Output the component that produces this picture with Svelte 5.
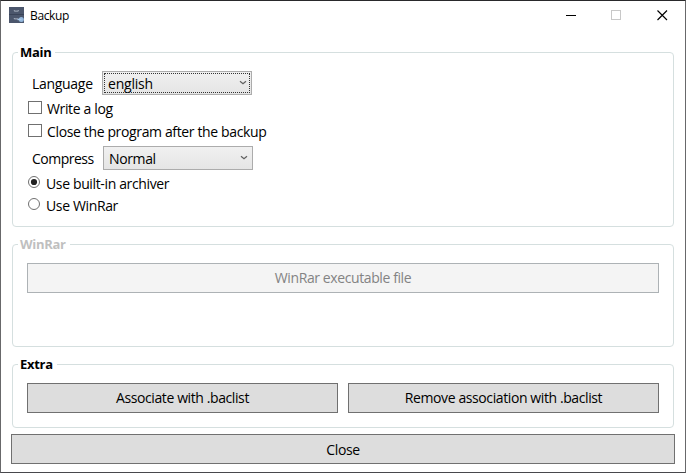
<script>
  let language = 'english';
  let compression = 'Normal';
  const checks = ['Write a log', 'Close the program after the backup'];
  const archivers = ['Use built-in archiver', 'Use WinRar'];
  let archiver = archivers[0];
</script>

<main class="window">
  <header>
    <svg class="logo" width="15" height="16" viewBox="0 0 15 16">
      <rect width="15" height="16" fill="#4b566c" />
      <path d="M0 7.5h15" stroke="#394358" stroke-width="1" />
      <path d="M5.3 3.2v.9h4v-.9M5.3 11v.9h4" fill="none" stroke="#b3bccb" stroke-width=".9" />
      <circle cx="12.3" cy="12.5" r="2.5" fill="#93b7dd" />
      <path d="M8.5 12.5h4" stroke="#a9c8e8" stroke-width="1.4" />
    </svg>
    <h1>Backup</h1>
    <nav>
      <svg width="46" height="30" viewBox="0 0 46 30" shape-rendering="crispEdges"><path d="M18 14.5h10" stroke="#000" /></svg>
      <svg width="46" height="30" viewBox="0 0 46 30"><rect x="17.5" y="9.5" width="9" height="9" fill="none" stroke="#c8c8c8" /></svg>
      <svg width="46" height="30" viewBox="0 0 46 30"><path d="M17.5 9.5l9.5 9.5M27 9.5l-9.5 9.5" stroke="#000" stroke-width="1.15" /></svg>
    </nav>
  </header>

  <section class="group settings">
    <h2>Main</h2>
    <div class="field">
      <span class="label language">Language</span>
      <div class="combo focused">
        <span>{language}</span>
        <svg width="8" height="6" viewBox="0 0 8 6"><path d="M1 1.2l3 2.6 3-2.6" fill="none" stroke="#606060" stroke-width="1.2" /></svg>
      </div>
    </div>
    {#each checks as text}
      <div class="check"><i></i><span>{text}</span></div>
    {/each}
    <div class="field second">
      <span class="label compress">Compress</span>
      <div class="combo">
        <span>{compression}</span>
        <svg width="8" height="6" viewBox="0 0 8 6"><path d="M1 1.2l3 2.6 3-2.6" fill="none" stroke="#606060" stroke-width="1.2" /></svg>
      </div>
    </div>
    {#each archivers as text}
      <div class="radio">
        <svg width="12" height="12" viewBox="0 0 12 12">
          <circle cx="6" cy="6" r="5.5" fill="#fff" stroke="#707070" />
          {#if text === archiver}<circle cx="6" cy="6" r="3.1" fill="#212121" />{/if}
        </svg>
        <span>{text}</span>
      </div>
    {/each}
  </section>

  <section class="group winrar">
    <h2 class="dim">WinRar</h2>
    <div class="buttons"><button disabled>WinRar executable file</button></div>
  </section>

  <section class="group extra">
    <h2>Extra</h2>
    <div class="buttons">
      <button>Associate with .baclist</button>
      <button>Remove association with .baclist</button>
    </div>
  </section>

  <button class="close">Close</button>
</main>

<style>
  .window {
    box-sizing: border-box;
    width: 686px;
    height: 473px;
    display: flex;
    flex-direction: column;
    background: #fff;
    border: 1px solid #68686a;
    border-top-color: #29292b;
    border-bottom-color: #48484c;
    font: 14px/20px "Open Sans", "Noto Sans", sans-serif;
    letter-spacing: -0.36px;
    color: #000;
    overflow: hidden;
  }
  span { white-space: nowrap; }
  header { display: flex; height: 30px; flex: none; padding-left: 8px; }
  .logo { margin-top: 6px; }
  h1 { margin: 5px 0 0 6px; font-size: 12px; line-height: 20px; font-weight: 400; letter-spacing: -0.35px; }
  nav { display: flex; margin: 0 -1px 0 auto; }
  .group {
    box-sizing: border-box;
    flex: none;
    margin: 0 11px;
    border: 1px solid #d5dfdf;
    border-radius: 4px;
    display: flex;
    flex-direction: column;
  }
  .settings { height: 175px; margin-top: 21px; }
  .winrar { height: 103px; margin-top: 17px; }
  .extra { height: 64px; margin-top: 17px; }
  h2 {
    align-self: flex-start;
    flex: none;
    margin: -11px 0 0 5px;
    padding: 0 4px 0 2px;
    background: #fff;
    font-size: 13px;
    line-height: 20px;
    font-weight: 700;
    letter-spacing: -0.3px;
  }
  .dim { color: #bfbfbf; }
  .field { display: flex; height: 24px; margin: 9px 0 0 19px; }
  .label { width: 70px; padding-top: 3px; }
  .language { letter-spacing: -0.3px; }
  .compress { letter-spacing: -0.5px; }
  .second { margin-top: -1px; }
  .second .label { width: 71px; }
  .combo {
    box-sizing: border-box;
    width: 150px;
    height: 24px;
    border: 1px solid #acacac;
    background: linear-gradient(#f0f0f0, #e5e5e5);
    display: flex;
    justify-content: space-between;
    padding: 2px 4px 0 5px;
  }
  .combo svg { margin-top: 6px; }
  .focused { outline: 1px dotted #333; outline-offset: -3px; }
  .focused span { letter-spacing: -0.2px; }
  .check { display: flex; height: 23px; margin-left: 15px; }
  .field + .check { margin-top: 6px; }
  .check i { box-sizing: border-box; width: 14px; height: 13px; border: 1px solid #707070; }
  .check span { margin: -2px 0 0 5px; }
  .radio { display: flex; height: 22px; margin-left: 15px; }
  .second + .radio { margin-top: 6px; }
  .radio span { margin: -2px 0 0 6px; }
  .buttons { display: flex; gap: 10px; margin: 9px 14px 0; }
  button {
    box-sizing: border-box;
    flex: 1 1 0;
    height: 30px;
    margin: 0;
    padding: 0;
    border: 1px solid #707070;
    border-radius: 0;
    background: #ddd;
    color: #000;
    font: inherit;
    letter-spacing: -0.4px;
  }
  button:disabled { background: #f4f4f4; border-color: #adb2b5; color: #838383; }
  .close { flex: none; margin: 6px 10px 0; padding-top: 2px; }
</style>
